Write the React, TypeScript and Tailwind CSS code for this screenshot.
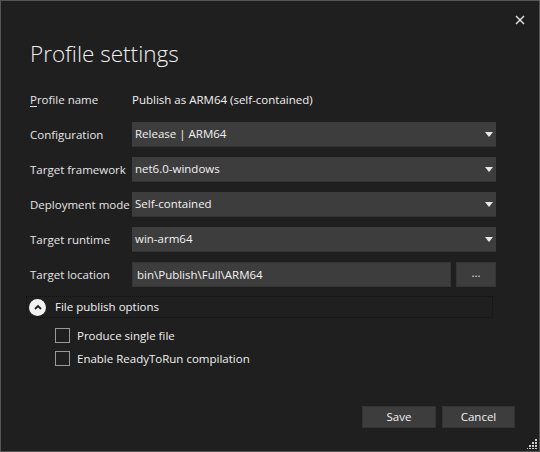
import React from "react";

const font = { fontFamily: '"Open Sans", "Noto Sans", sans-serif' };

function Arrow() {
  return (
    <svg width="8" height="5" viewBox="0 0 8 5" className="shrink-0">
      <polygon points="0,0 8,0 4,5" fill="#e8e8e8" />
    </svg>
  );
}

function Select({ value }: { value: string }) {
  return (
    <div className="h-[25px] bg-[#3d3d3d] border-b border-[#333333] flex items-center justify-between pl-[3px] pr-[3px] text-[#f2f2f2]">
      <span>{value}</span>
      <Arrow />
    </div>
  );
}

function Label({ children }: { children: React.ReactNode }) {
  return <div className="h-[25px] flex items-center text-[#e6e6e6] whitespace-nowrap">{children}</div>;
}

export default function App() {
  return (
    <div
      className="w-[540px] h-[452px] bg-[#1f1f1f] border border-[#555555] flex flex-col relative text-[11.5px] overflow-hidden"
      style={font}
    >
      {/* close */}
      <div className="flex justify-end pt-[14px] pr-[14px] h-[37px]">
        <svg width="10" height="10" viewBox="0 0 10 10">
          <path d="M1 1 L9 9 M9 1 L1 9" stroke="#e6e6e6" strokeWidth="1.4" />
        </svg>
      </div>
      <div className="pl-[29px] text-[22.5px] leading-[32px] font-light text-[#f0f0f0]">Profile settings</div>

      <div className="mt-[17px] ml-[29px] mr-[43px] grid grid-cols-[102px_1fr] gap-y-[10px]">
        <Label>
          <span>
            <span className="underline underline-offset-2">P</span>rofile name
          </span>
        </Label>
        <div className="h-[25px] flex items-center text-[#f2f2f2]">Publish as ARM64 (self-contained)</div>

        <Label>Configuration</Label>
        <Select value="Release | ARM64" />

        <Label>Target framework</Label>
        <Select value="net6.0-windows" />

        <Label>Deployment mode</Label>
        <Select value="Self-contained" />

        <Label>Target runtime</Label>
        <Select value="win-arm64" />

        <Label>Target location</Label>
        <div className="flex gap-[5px]">
          <div className="flex-1 h-[25px] bg-[#3d3d3d] border border-[#353535] flex items-center pl-[4px] text-[#f2f2f2]">
            bin\Publish\Full\ARM64
          </div>
          <div className="w-[40px] h-[25px] bg-[#3d3d3d] border border-[#353535] flex items-center justify-center text-[#e6e6e6] leading-none pb-[4px]">
            ...
          </div>
        </div>
      </div>

      <div className="mt-[9px] ml-[25px] mr-[46px] h-[22px] border border-dotted border-[#111111] flex items-center gap-[9px] pl-[2px]">
        <div className="w-[17px] h-[17px] rounded-full bg-[#f2f2f2] flex items-center justify-center">
          <svg width="8" height="6" viewBox="0 0 8 6">
            <path d="M1 5 L4 2 L7 5" stroke="#1f1f1f" strokeWidth="1.8" fill="none" />
          </svg>
        </div>
        <span className="text-[#f2f2f2]">File publish options</span>
      </div>

      <div className="mt-[10px] ml-[54px] flex flex-col gap-[8px]">
        <div className="flex items-center gap-[7px] h-[15px]">
          <div className="w-[15px] h-[15px] border border-[#999999]" />
          <span className="text-[#f0f0f0]">Produce single file</span>
        </div>
        <div className="flex items-center gap-[7px] h-[15px]">
          <div className="w-[15px] h-[15px] border border-[#999999]" />
          <span className="text-[#f0f0f0]">Enable ReadyToRun compilation</span>
        </div>
      </div>

      <div className="mt-auto mb-[23px] mr-[24px] flex justify-end gap-[6px]">
        <div className="w-[74px] h-[22px] bg-[#3d3d3d] border border-[#333333] flex items-center justify-center text-[#f2f2f2]">
          Save
        </div>
        <div className="w-[73px] h-[22px] bg-[#3d3d3d] border border-[#333333] flex items-center justify-center text-[#f2f2f2]">
          Cancel
        </div>
      </div>

      {/* resize grip */}
      <svg className="absolute right-[2px] bottom-[2px]" width="10" height="10" viewBox="0 0 10 10">
        {[
          [8, 0], [8, 3], [5, 3], [8, 6], [5, 6], [2, 6], [8, 9], [5, 9], [2, 9], [-1, 9],
        ].map(([x, y], i) => (
          <rect key={i} x={x} y={y - 0} width="2" height="2" fill="#cfcfcf" />
        ))}
      </svg>
    </div>
  );
}
